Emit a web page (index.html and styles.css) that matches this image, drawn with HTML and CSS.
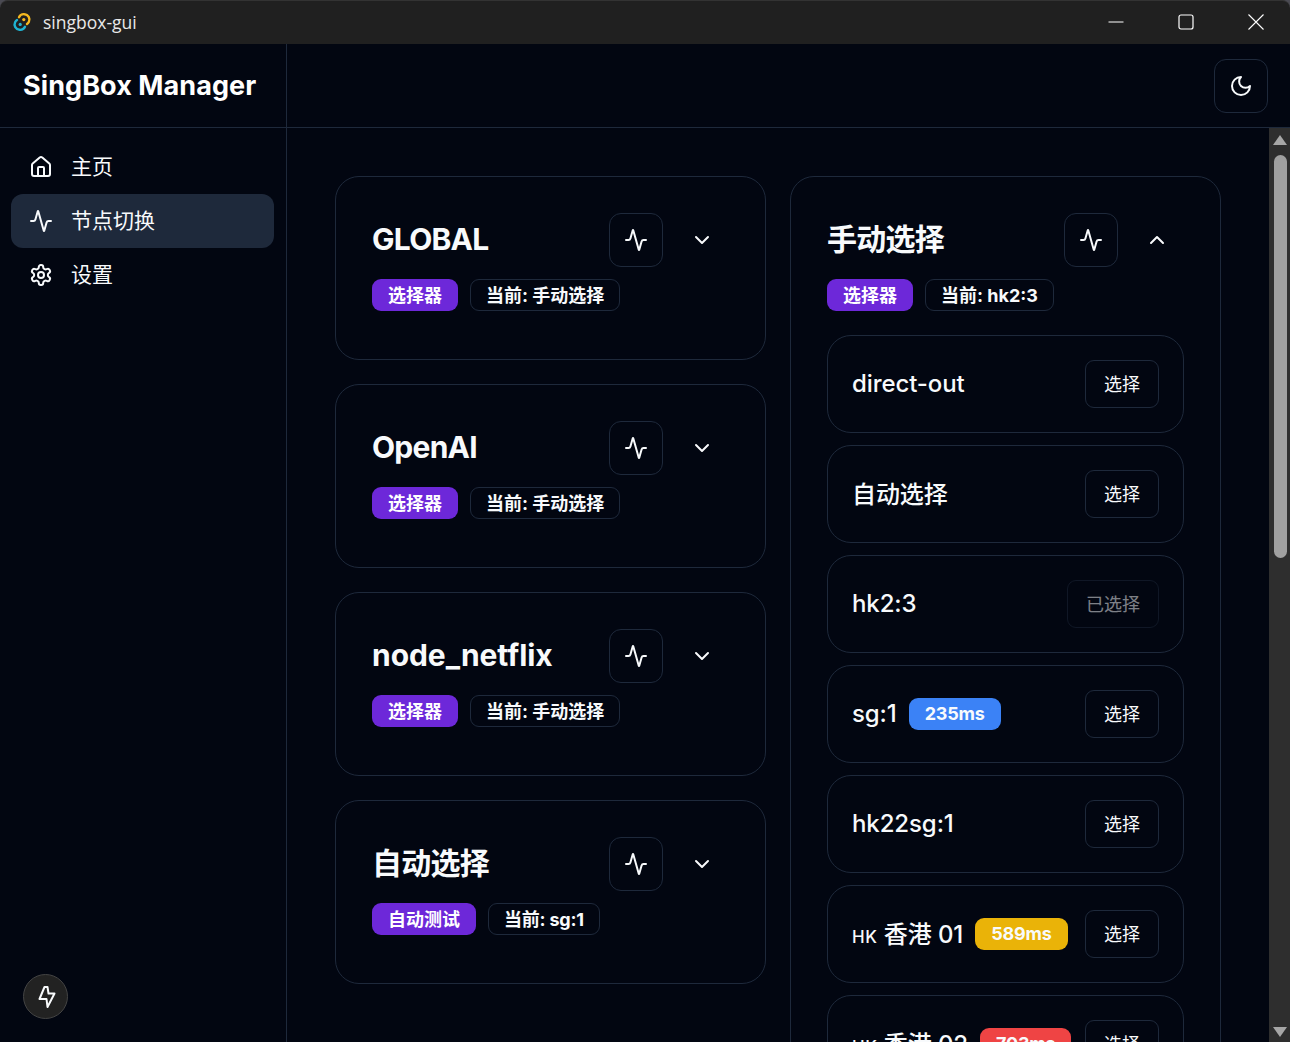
FILE: index.html
```html
<!DOCTYPE html>
<html lang="zh-CN">
<head>
    <meta charset="UTF-8">
    <meta name="viewport" content="width=device-width, initial-scale=1.0">
    <title>singbox-gui</title>
    <link rel="stylesheet" href="styles.css">
</head>
<body>
    <svg class="icon-defs" width="0" height="0">
        <symbol id="i-activity" viewBox="0 0 24 24"><path d="M22 12h-2.48a2 2 0 0 0-1.93 1.46l-2.35 8.36a.25.25 0 0 1-.48 0L9.24 2.18a.25.25 0 0 0-.48 0l-2.35 8.36A2 2 0 0 1 4.49 12H2"/></symbol>
        <symbol id="i-down" viewBox="0 0 24 24"><path d="m6 9 6 6 6-6"/></symbol>
        <symbol id="i-up" viewBox="0 0 24 24"><path d="m18 15-6-6-6 6"/></symbol>
    </svg>

    <div class="titlebar">
        <svg class="app-logo" width="20" height="20" viewBox="0 0 20 20" fill="none" stroke-width="2.4" stroke-linecap="round">
            <path d="M7 5.2A5.4 5.4 0 0 1 12.5 2.2a5.3 5.3 0 0 1 4.4 7.6 5.5 5.5 0 0 1-1.9 2.2" stroke="#f5b81f"/>
            <path d="M13 14.8a5.4 5.4 0 0 1-5.5 3a5.3 5.3 0 0 1-4.4-7.6 5.5 5.5 0 0 1 1.9-2.2" stroke="#1fb4d2"/>
            <circle cx="11.8" cy="7.6" r="1.6" fill="#f5b81f" stroke="none"/>
            <circle cx="8.2" cy="12.4" r="1.6" fill="#1fb4d2" stroke="none"/>
        </svg>
        <span class="app-name">singbox-gui</span>
        <div class="win-controls">
            <div class="win-btn"><svg width="16" height="16" viewBox="0 0 16 16"><path d="M0.5 8h15" stroke="#fff"/></svg></div>
            <div class="win-btn"><svg width="16" height="16" viewBox="0 0 16 16" fill="none"><rect x="1" y="1" width="14" height="14" rx="2" stroke="#fff" stroke-width="1.2"/></svg></div>
            <div class="win-btn"><svg width="16" height="16" viewBox="0 0 16 16"><path d="M0.5 0.5l15 15M15.5 0.5l-15 15" stroke="#fff" stroke-width="1.1"/></svg></div>
        </div>
    </div>

    <div class="app">
        <aside class="sidebar">
            <div class="brand">SingBox Manager</div>
            <nav class="nav">
                <a class="nav-item">
                    <svg class="icon" viewBox="0 0 24 24"><path d="M15 21v-8a1 1 0 0 0-1-1h-4a1 1 0 0 0-1 1v8"/><path d="M3 10a2 2 0 0 1 .709-1.528l7-5.999a2 2 0 0 1 2.582 0l7 5.999A2 2 0 0 1 21 10v9a2 2 0 0 1-2 2H5a2 2 0 0 1-2-2z"/></svg>
                    <span class="nav-label">主页</span>
                </a>
                <a class="nav-item active">
                    <svg class="icon"><use href="#i-activity"/></svg>
                    <span class="nav-label">节点切换</span>
                </a>
                <a class="nav-item">
                    <svg class="icon" viewBox="0 0 24 24"><path d="M12.22 2h-.44a2 2 0 0 0-2 2v.18a2 2 0 0 1-1 1.73l-.43.25a2 2 0 0 1-2 0l-.15-.08a2 2 0 0 0-2.73.73l-.22.38a2 2 0 0 0 .73 2.73l.15.1a2 2 0 0 1 1 1.72v.51a2 2 0 0 1-1 1.74l-.15.09a2 2 0 0 0-.73 2.73l.22.38a2 2 0 0 0 2.73.73l.15-.08a2 2 0 0 1 2 0l.43.25a2 2 0 0 1 1 1.73V20a2 2 0 0 0 2 2h.44a2 2 0 0 0 2-2v-.18a2 2 0 0 1 1-1.73l.43-.25a2 2 0 0 1 2 0l.15.08a2 2 0 0 0 2.73-.73l.22-.39a2 2 0 0 0-.73-2.73l-.15-.08a2 2 0 0 1-1-1.74v-.5a2 2 0 0 1 1-1.74l.15-.09a2 2 0 0 0 .73-2.73l-.22-.38a2 2 0 0 0-2.73-.73l-.15.08a2 2 0 0 1-2 0l-.43-.25a2 2 0 0 1-1-1.73V4a2 2 0 0 0-2-2z"/><circle cx="12" cy="12" r="3"/></svg>
                    <span class="nav-label">设置</span>
                </a>
            </nav>
            <div class="side-foot">
                <div class="bolt-btn">
                    <svg class="icon" viewBox="0 0 24 24"><path d="M5.5 14 10.5 2h3l1 6.5h6L13.5 22l-1-8z"/></svg>
                </div>
            </div>
        </aside>

        <div class="main">
            <header class="topbar">
                <button class="square-btn">
                    <svg class="icon" viewBox="0 0 24 24"><path d="M12 3a6 6 0 0 0 9 9 9 9 0 1 1-9-9Z"/></svg>
                </button>
            </header>

            <div class="content-wrap">
                <div class="content">
                    <div class="column">
                        <section class="card">
                            <div class="card-head">
                                <h2 class="card-title">GLOBAL</h2>
                                <button class="square-btn"><svg class="icon"><use href="#i-activity"/></svg></button>
                                <button class="square-btn ghost"><svg class="icon"><use href="#i-down"/></svg></button>
                            </div>
                            <div class="badges">
                                <span class="badge purple">选择器</span>
                                <span class="badge outline">当前: 手动选择</span>
                            </div>
                        </section>
                        <section class="card">
                            <div class="card-head">
                                <h2 class="card-title">OpenAI</h2>
                                <button class="square-btn"><svg class="icon"><use href="#i-activity"/></svg></button>
                                <button class="square-btn ghost"><svg class="icon"><use href="#i-down"/></svg></button>
                            </div>
                            <div class="badges">
                                <span class="badge purple">选择器</span>
                                <span class="badge outline">当前: 手动选择</span>
                            </div>
                        </section>
                        <section class="card">
                            <div class="card-head">
                                <h2 class="card-title loose">node_netflix</h2>
                                <button class="square-btn"><svg class="icon"><use href="#i-activity"/></svg></button>
                                <button class="square-btn ghost"><svg class="icon"><use href="#i-down"/></svg></button>
                            </div>
                            <div class="badges">
                                <span class="badge purple">选择器</span>
                                <span class="badge outline">当前: 手动选择</span>
                            </div>
                        </section>
                        <section class="card">
                            <div class="card-head">
                                <h2 class="card-title">自动选择</h2>
                                <button class="square-btn"><svg class="icon"><use href="#i-activity"/></svg></button>
                                <button class="square-btn ghost"><svg class="icon"><use href="#i-down"/></svg></button>
                            </div>
                            <div class="badges">
                                <span class="badge purple">自动测试</span>
                                <span class="badge outline tight">当前: sg:1</span>
                            </div>
                        </section>
                    </div>

                    <div class="column">
                        <section class="card">
                            <div class="card-head">
                                <h2 class="card-title">手动选择</h2>
                                <button class="square-btn"><svg class="icon"><use href="#i-activity"/></svg></button>
                                <button class="square-btn ghost"><svg class="icon"><use href="#i-up"/></svg></button>
                            </div>
                            <div class="badges">
                                <span class="badge purple">选择器</span>
                                <span class="badge outline">当前: hk2:3</span>
                            </div>
                            <div class="nodes">
                                <div class="node"><span class="node-name">direct-out</span><button class="pick">选择</button></div>
                                <div class="node"><span class="node-name cjk">自动选择</span><button class="pick">选择</button></div>
                                <div class="node"><span class="node-name">hk2:3</span><button class="pick picked">已选择</button></div>
                                <div class="node"><span class="node-name">sg:1</span><span class="badge blue tight">235ms</span><button class="pick">选择</button></div>
                                <div class="node"><span class="node-name">hk22sg:1</span><button class="pick">选择</button></div>
                                <div class="node"><span class="node-name cjk"><span class="flag">HK</span> 香港 01</span><span class="badge yellow tight">589ms</span><button class="pick">选择</button></div>
                                <div class="node"><span class="node-name cjk"><span class="flag">HK</span> 香港 02</span><span class="badge red tight">703ms</span><button class="pick">选择</button></div>
                            </div>
                        </section>
                    </div>
                </div>

                <div class="scrollbar">
                    <div class="arrow-up"></div>
                    <div class="thumb"></div>
                    <div class="track-rest"></div>
                    <div class="arrow-down"></div>
                </div>
            </div>
        </div>
    </div>
</body>
</html>
```

FILE: styles.css
```css
* {
    box-sizing: border-box;
}

html, body {
    margin: 0;
    height: 1042px;
    overflow: hidden;
}

html {
    background: #4a4a52;
}

body {
    display: flex;
    flex-direction: column;
    color: #f8fafc;
    font-family: Inter, "Noto Sans CJK SC", sans-serif;
    font-size: 18px;
}

.icon-defs {
    display: none;
}

.icon {
    width: 24px;
    height: 24px;
    fill: none;
    stroke: #f8fafc;
    stroke-width: 2;
    stroke-linecap: round;
    stroke-linejoin: round;
    flex-shrink: 0;
}

/* window title bar */
.titlebar {
    height: 44px;
    flex-shrink: 0;
    display: flex;
    align-items: center;
    padding: 0 0 1px 12px;
    background: #202020;
    border-top: 1px solid #333;
    border-top-left-radius: 8px;
    border-top-right-radius: 8px;
}

.app-name {
    margin-left: 11px;
    font-family: "Open Sans", "Noto Sans", sans-serif;
    font-size: 17.5px;
    color: #e8e8e8;
}

.win-controls {
    margin-left: auto;
    margin-right: -1px;
    display: flex;
}

.win-btn {
    width: 70px;
    display: flex;
    justify-content: center;
    align-items: center;
}

/* layout */
.app {
    flex: 1;
    min-height: 0;
    display: flex;
    background: #020611;
}

.sidebar {
    width: 287px;
    flex-shrink: 0;
    display: flex;
    flex-direction: column;
    border-right: 1px solid #1e293b;
}

.brand {
    height: 84px;
    flex-shrink: 0;
    padding-left: 23px;
    display: flex;
    align-items: center;
    font-size: 27px;
    font-weight: 700;
    letter-spacing: 0.07px;
    color: #fff;
    border-bottom: 1px solid #1e293b;
}

.nav {
    padding: 12px 12px 0 11px;
    display: flex;
    flex-direction: column;
}

.nav-item {
    height: 54px;
    display: flex;
    align-items: center;
    gap: 18px;
    padding-left: 18px;
    border-radius: 12px;
    font-size: 21px;
}

.nav-label {
    margin-bottom: 4px;
}

.nav-item.active {
    background: #1e293b;
}

.side-foot {
    margin-top: auto;
    padding: 0 0 23px 23px;
}

.bolt-btn {
    width: 45px;
    height: 45px;
    border-radius: 50%;
    background: #222;
    border: 1px solid #444;
    display: flex;
    align-items: center;
    justify-content: center;
}

.main {
    flex: 1;
    min-width: 0;
    display: flex;
    flex-direction: column;
}

.topbar {
    height: 84px;
    flex-shrink: 0;
    display: flex;
    justify-content: flex-end;
    align-items: center;
    padding-right: 22px;
    border-bottom: 1px solid #1e293b;
}

.square-btn {
    width: 54px;
    height: 54px;
    flex-shrink: 0;
    padding: 0;
    background: transparent;
    border: 1px solid #1e293b;
    border-radius: 12px;
    display: flex;
    align-items: center;
    justify-content: center;
}

.square-btn.ghost {
    border-color: transparent;
}

.content-wrap {
    flex: 1;
    min-height: 0;
    display: flex;
}

.content {
    flex: 1;
    min-width: 0;
    overflow: hidden;
    padding: 48px 48px 0;
    display: grid;
    grid-template-columns: 1fr 1fr;
    gap: 24px;
    align-items: start;
}

.column {
    display: flex;
    flex-direction: column;
    gap: 24px;
}

/* cards */
.card {
    border: 1px solid #1e293b;
    border-radius: 24px;
    padding: 36px;
}

.card-head {
    display: flex;
    align-items: center;
    gap: 12px;
}

.card-title {
    flex: 1;
    margin: 0;
    padding-bottom: 2px;
    font-size: 30px;
    font-weight: 700;
    letter-spacing: -0.75px;
    line-height: 1;
}

.card-title.loose {
    letter-spacing: -0.05px;
}

.badges {
    display: flex;
    gap: 12px;
    margin: 12px 0;
}

.badge {
    height: 32px;
    display: inline-flex;
    align-items: center;
    padding: 0 15px 2px;
    border-radius: 9px;
    border: 1px solid transparent;
    font-size: 18px;
    font-weight: 700;
    white-space: nowrap;
}

.badge.tight {
    letter-spacing: -0.2px;
}

.badge.purple {
    background: #6d28d9;
    color: #fff;
}

.badge.outline {
    border-color: #1e293b;
}

.badge.blue {
    background: #3b82f6;
}

.badge.yellow {
    background: #eab308;
}

.badge.red {
    background: #ef4444;
}

/* node list */
.nodes {
    display: flex;
    flex-direction: column;
    gap: 12px;
    margin-top: 24px;
}

.node {
    height: 98px;
    flex-shrink: 0;
    display: flex;
    align-items: center;
    gap: 12px;
    padding: 0 24px;
    border: 1px solid #1e293b;
    border-radius: 24px;
}

.node-name {
    padding-bottom: 2px;
    font-size: 24px;
    font-weight: 500;
    letter-spacing: -0.1px;
    white-space: nowrap;
}

.node-name.cjk {
    padding-bottom: 4px;
}

.flag {
    font-size: 17px;
    letter-spacing: 0.6px;
}

.pick {
    margin-left: auto;
    height: 48px;
    padding: 0 18px 2px;
    background: transparent;
    border: 1px solid #1e293b;
    border-radius: 9px;
    color: #f8fafc;
    font-family: inherit;
    font-size: 18px;
    white-space: nowrap;
}

.pick.picked {
    opacity: 0.5;
}

/* scrollbar */
.scrollbar {
    width: 21px;
    flex-shrink: 0;
    background: #2e2e2e;
    display: flex;
    flex-direction: column;
    align-items: center;
    padding: 7px 0 5px 1px;
}

.arrow-up, .arrow-down {
    width: 0;
    height: 0;
    border-left: 7.5px solid transparent;
    border-right: 7.5px solid transparent;
}

.arrow-up {
    border-bottom: 10px solid #a6a6a6;
}

.arrow-down {
    border-top: 10px solid #a6a6a6;
}

.thumb {
    width: 13px;
    height: 403px;
    margin-top: 10px;
    border-radius: 7px;
    background: #a0a0a0;
}

.track-rest {
    flex: 1;
}
```
